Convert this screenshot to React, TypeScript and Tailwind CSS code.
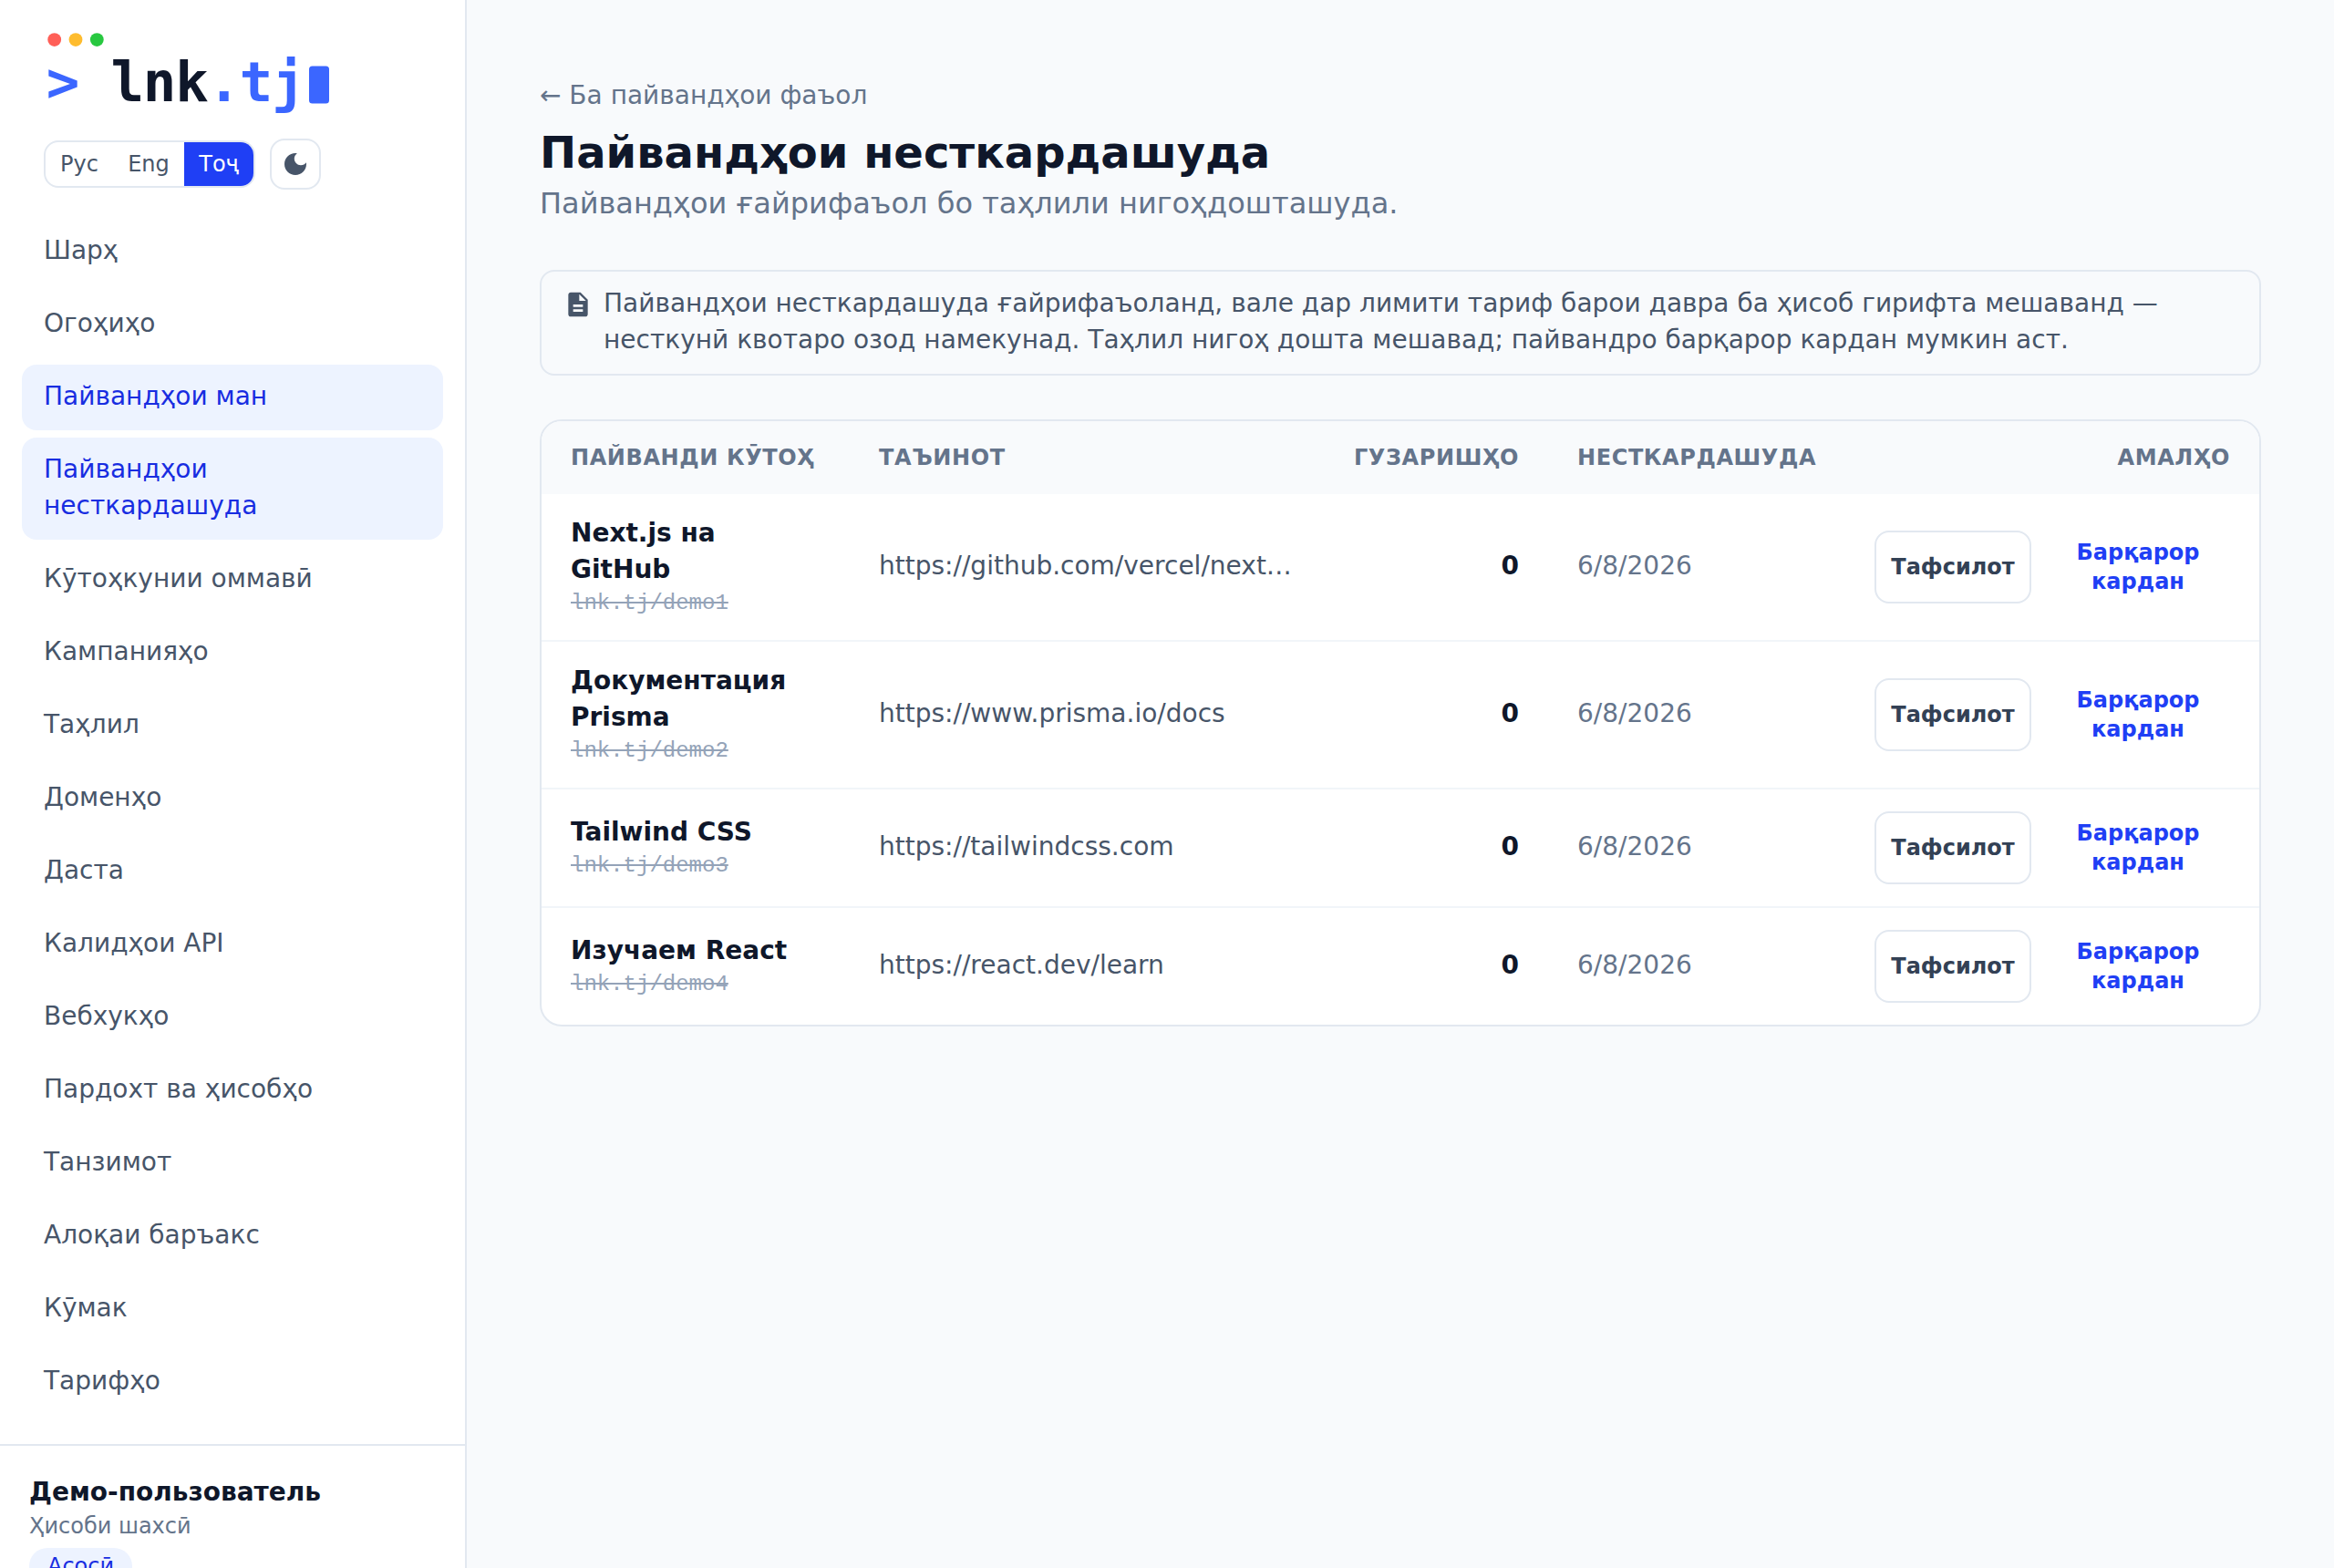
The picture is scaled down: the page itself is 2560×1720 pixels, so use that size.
import React from "react";
import clsx from "clsx";

const navItems = [
  { label: "Шарҳ" },
  { label: "Огоҳиҳо" },
  { label: "Пайвандҳои ман", active: true },
  { label: "Пайвандҳои несткардашуда", active: true },
  { label: "Кӯтоҳкунии оммавӣ" },
  { label: "Кампанияҳо" },
  { label: "Таҳлил" },
  { label: "Доменҳо" },
  { label: "Даста" },
  { label: "Калидҳои API" },
  { label: "Вебхукҳо" },
  { label: "Пардохт ва ҳисобҳо" },
  { label: "Танзимот" },
  { label: "Алоқаи баръакс" },
  { label: "Кӯмак" },
  { label: "Тарифҳо" },
];

const links = [
  { title: "Next.js на GitHub", slug: "lnk.tj/demo1", url: "https://github.com/vercel/next.js", clicks: 0, date: "6/8/2026" },
  { title: "Документация Prisma", slug: "lnk.tj/demo2", url: "https://www.prisma.io/docs", clicks: 0, date: "6/8/2026" },
  { title: "Tailwind CSS", slug: "lnk.tj/demo3", url: "https://tailwindcss.com", clicks: 0, date: "6/8/2026" },
  { title: "Изучаем React", slug: "lnk.tj/demo4", url: "https://react.dev/learn", clicks: 0, date: "6/8/2026" },
];

const Logo = () => (
  <svg width="320" height="104" viewBox="0 0 320 104" className="block">
    <circle cx="11.7" cy="11.6" r="7.4" fill="#ff5f57" />
    <circle cx="35" cy="11.6" r="7.4" fill="#febc2e" />
    <circle cx="58.3" cy="11.6" r="7.4" fill="#28c840" />
    <g fontFamily="'DejaVu Sans Mono', monospace" fontWeight="700" fontSize="60.67" letterSpacing="-1.17">
      <text x="2.8" y="79" fill="#3b66ff">&gt;</text>
      <text x="73.5" y="79" fill="#0f172a">lnk</text>
      <text x="179.5" y="79" fill="#3b66ff">.tj</text>
    </g>
    <rect x="291" y="40.6" width="22" height="41" rx="3.5" fill="#3b66ff" />
  </svg>
);

const MoonIcon = () => (
  <svg viewBox="0 0 24 24" fill="currentColor" className="size-8 shrink-0">
    <path d="M12 3c-4.97 0-9 4.03-9 9s4.03 9 9 9 9-4.03 9-9c0-.46-.04-.92-.1-1.36-.98 1.37-2.58 2.26-4.4 2.26-2.98 0-5.4-2.42-5.4-5.4 0-1.81.89-3.42 2.26-4.4-.44-.06-.9-.1-1.36-.1z" />
  </svg>
);

const DocIcon = () => (
  <svg viewBox="0 0 24 24" fill="currentColor" className="mt-1 size-8 shrink-0">
    <path d="M14 2H6c-1.1 0-1.99.9-1.99 2L4 20c0 1.1.89 2 1.99 2H18c1.1 0 2-.9 2-2V8l-6-6zm2 16H8v-2h8v2zm0-4H8v-2h8v2zm-3-5V3.5L18.5 9H13z" />
  </svg>
);

const Sidebar = () => (
  <aside className="flex w-[512px] shrink-0 flex-col border-r-2 border-[#e2e8f0] bg-white">
    <div className="flex flex-col gap-4 px-12 pt-8">
      <Logo />
      <div className="flex items-center gap-4">
        <div className="flex overflow-hidden rounded-2xl border-2 border-[#e2e8f0] text-2xl leading-8 text-[#475569]">
          <button className="w-[74px] py-2">Рус</button>
          <button className="w-[78px] py-2">Eng</button>
          <button className="w-[76px] bg-[#1f3ff5] py-2 text-white">Тоҷ</button>
        </div>
        <button className="flex size-14 items-center justify-center rounded-2xl border-2 border-[#e2e8f0] text-[#475569]">
          <MoonIcon />
        </button>
      </div>
    </div>

    <nav className="flex flex-col gap-2 px-6 py-8">
      {navItems.map((item) => (
        <a
          key={item.label}
          className={clsx(
            "rounded-2xl px-6 pt-[15px] pb-[17px] text-[28px] leading-10",
            item.active ? "bg-[#edf3ff] text-[#182de1]" : "text-[#475569]"
          )}
        >
          {item.label}
        </a>
      ))}
    </nav>

    <div className="border-t-2 border-[#e2e8f0] px-8 pt-[31px] pb-8">
      <p className="mb-px text-[28px] leading-10 font-bold text-[#0f172a]">Демо-пользователь</p>
      <p className="text-2xl leading-8 text-[#64748b]">Ҳисоби шахсӣ</p>
      <span className="mt-2 inline-block rounded-full bg-[#edf3ff] px-5 py-1 text-2xl leading-8 text-[#182de1]">
        Асосӣ
      </span>
    </div>
  </aside>
);

const LinksTable = () => (
  <div className="mt-12 overflow-hidden rounded-3xl border-2 border-[#e2e8f0] bg-white">
    <table className="w-full table-fixed">
      <colgroup>
        <col className="w-[338px]" />
        <col className="w-[520px]" />
        <col className="w-[246px]" />
        <col className="w-[326px]" />
        <col />
      </colgroup>
      <thead className="bg-[#f8fafc] text-left text-2xl leading-8 tracking-wide text-[#64748b] uppercase">
        <tr className="whitespace-nowrap">
          <th className="px-8 py-6 font-bold">Пайванди кӯтоҳ</th>
          <th className="px-8 py-6 font-bold">Таъинот</th>
          <th className="px-8 py-6 text-right font-bold">Гузаришҳо</th>
          <th className="px-8 py-6 font-bold">Несткардашуда</th>
          <th className="px-8 py-6 text-right font-bold">Амалҳо</th>
        </tr>
      </thead>
      <tbody className="divide-y-2 divide-[#f1f5f9] text-[28px] leading-10">
        {links.map((link) => (
          <tr key={link.slug}>
            <td className="px-8 pt-[23px] pb-6">
              <div className="mb-px font-bold text-[#0f172a]">{link.title}</div>
              <div className="font-['Liberation_Mono',monospace] text-2xl leading-8 text-[#94a3b8] line-through">
                {link.slug}
              </div>
            </td>
            <td className="truncate px-8 pt-[23px] pb-[25px] text-[#475569]">{link.url}</td>
            <td className="px-8 pt-[23px] pb-[25px] text-right font-bold text-[#0f172a]">{link.clicks}</td>
            <td className="px-8 pt-[23px] pb-[25px] text-[#64748b]">{link.date}</td>
            <td className="px-8 py-6">
              <div className="flex gap-4 text-2xl leading-8 font-bold">
                <button className="w-[172px] rounded-2xl border-2 border-[#e2e8f0] text-[#334155]">Тафсилот</button>
                <button className="flex-1 px-8 py-2 text-[#1f3ff5]">Барқарор кардан</button>
              </div>
            </td>
          </tr>
        ))}
      </tbody>
    </table>
  </div>
);

export default function App() {
  return (
    <div className="flex h-screen overflow-hidden bg-[#f8fafc] font-['DejaVu_Sans',sans-serif] text-[#0f172a]">
      <Sidebar />
      <main className="flex-1 p-20">
        <a className="block text-[28px] leading-[50px] text-[#64748b]">← Ба пайвандҳои фаъол</a>
        <h1 className="mt-[5px] text-5xl leading-[64px] font-bold">Пайвандҳои несткардашуда</h1>
        <p className="text-[32px] leading-[48px] text-[#64748b]">Пайвандҳои ғайрифаъол бо таҳлили нигоҳдошташуда.</p>

        {/* Note about the plan quota */}
        <div className="mt-[49px] flex gap-3 rounded-2xl border-2 border-[#e2e8f0] px-6 py-4 text-[#475569]">
          <DocIcon />
          <p className="-mt-px mb-px text-[28px] leading-10">
            Пайвандҳои несткардашуда ғайрифаъоланд, вале дар лимити тариф барои давра ба ҳисоб гирифта мешаванд —
            несткунӣ квотаро озод намекунад. Таҳлил нигоҳ дошта мешавад; пайвандро барқарор кардан мумкин аст.
          </p>
        </div>

        <LinksTable />
      </main>
    </div>
  );
}
